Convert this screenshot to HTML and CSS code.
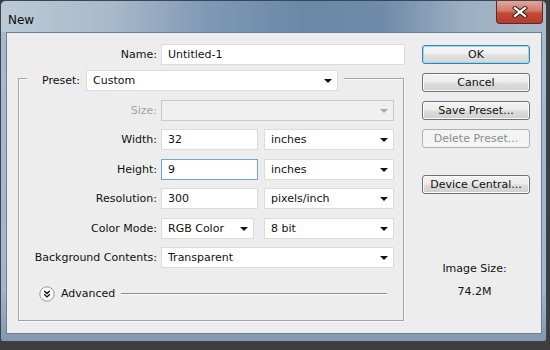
FILE: index.html
```html
<!DOCTYPE html>
<html>
<head>
<meta charset="utf-8">
<link rel="stylesheet" href="styles.css">
</head>
<body>
<div class="window">
  <div class="titlebar">
    <span class="title">New</span>
    <div class="close">
      <svg width="16" height="12" viewBox="0 0 16 12"><path d="M3 2 L13 10 M13 2 L3 10" stroke="#3a2420" stroke-width="4.2" stroke-linecap="square"/><path d="M3 2 L13 10 M13 2 L3 10" stroke="#ffffff" stroke-width="2.2" stroke-linecap="square"/></svg>
    </div>
  </div>
  <div class="client">
    <div class="form">
      <div class="name-row">
        <label class="lbl name-lbl">Name:</label>
        <div class="field name-field">Untitled-1</div>
      </div>
      <div class="group">
        <div class="preset-row">
          <label class="lbl">Preset:</label>
          <div class="field select preset-sel">Custom<span class="arrow"></span></div>
        </div>
        <div class="grid">
          <label class="lbl disabled">Size:</label>
          <div class="field select wide disabled-field"><span class="arrow gray"></span></div>

          <label class="lbl">Width:</label>
          <div class="pair">
            <div class="field num">32</div>
            <div class="field select unit">inches<span class="arrow"></span></div>
          </div>

          <label class="lbl">Height:</label>
          <div class="pair">
            <div class="field num focus">9</div>
            <div class="field select unit">inches<span class="arrow"></span></div>
          </div>

          <label class="lbl">Resolution:</label>
          <div class="pair">
            <div class="field num">300</div>
            <div class="field select unit">pixels/inch<span class="arrow"></span></div>
          </div>

          <label class="lbl">Color Mode:</label>
          <div class="pair">
            <div class="field select mode">RGB Color<span class="arrow"></span></div>
            <div class="field select unit">8 bit<span class="arrow"></span></div>
          </div>

          <label class="lbl">Background Contents:</label>
          <div class="field select wide">Transparent<span class="arrow"></span></div>
        </div>
        <div class="advanced">
          <span class="adv-icon">
            <svg width="16" height="16" viewBox="0 0 16 16"><circle cx="8" cy="8" r="7.2" fill="#fbfbfb" stroke="#9a9a9a" stroke-width="1"/><path d="M5.2 5 L8 7.6 L10.8 5 M5.2 8.3 L8 10.9 L10.8 8.3" fill="none" stroke="#111" stroke-width="1.4"/></svg>
          </span>
          <span class="adv-text">Advanced</span>
          <span class="adv-line"></span>
        </div>
      </div>
    </div>
    <div class="side">
      <div class="btn default">OK</div>
      <div class="btn">Cancel</div>
      <div class="btn">Save Preset...</div>
      <div class="btn disabled-btn">Delete Preset...</div>
      <div class="btn device">Device Central...</div>
      <div class="imgsize">
        <div>Image Size:</div>
        <div class="imgval">74.2M</div>
      </div>
    </div>
  </div>
</div>
</body>
</html>
```

FILE: styles.css
```css
html, body {
  margin: 0;
  padding: 0;
}
body {
  width: 550px;
  height: 350px;
  background: #3e3e3e;
  font-family: "DejaVu Sans", sans-serif;
  font-size: 11px;
  color: #111;
  overflow: hidden;
}
.window {
  width: 547px;
  height: 342px;
  box-sizing: border-box;
  border: 1px solid #3a4654;
  border-radius: 6px 6px 3px 3px;
  background: linear-gradient(to bottom, #a9bacb 0%, #a3b5c7 85%, #8397ad 100%);
  padding: 0 4px 7px 5px;
  display: flex;
  flex-direction: column;
  overflow: hidden;
}
.titlebar {
  height: 31px;
  margin: 0 -4px 0 -5px;
  padding-left: 7px;
  display: flex;
  align-items: flex-start;
  justify-content: space-between;
  background: linear-gradient(to right, #bccad7 0%, #a8b9ca 20%, #7f99b5 38%, #6b88a7 55%, #6f8ba9 70%, #9cafc2 85%, #a9b9c9 100%);
}
.title {
  font-size: 12px;
  color: #0c0c0c;
  margin-top: 12px;
}
.close {
  width: 45px;
  height: 22px;
  margin-right: 3px;
  border: 1px solid #5a2a24;
  border-top: none;
  border-radius: 0 0 4px 4px;
  background: linear-gradient(to bottom, #e2a79d 0%, #d3786a 45%, #c24a38 55%, #b93b2a 100%);
  display: flex;
  align-items: center;
  justify-content: center;
}
.client {
  flex: 1;
  background: #ededed;
  border: 1px solid #6d7f92;
  display: flex;
}
.form {
  width: 410px;
  padding-top: 11px;
}
.lbl {
  display: flex;
  align-items: center;
  justify-content: flex-end;
  height: 21px;
  white-space: nowrap;
}
.disabled {
  color: #a3a3a3;
}
.name-row {
  display: flex;
  gap: 4px;
}
.name-lbl {
  width: 150px;
}
.field {
  box-sizing: border-box;
  height: 21px;
  background: #ffffff;
  border: 1px solid #dcdcdc;
  padding-left: 6px;
  display: flex;
  align-items: center;
  position: relative;
  white-space: nowrap;
}
.name-field {
  width: 244px;
}
.select .arrow {
  position: absolute;
  right: 5px;
  top: 8px;
  width: 0;
  height: 0;
  border-left: 4px solid transparent;
  border-right: 4px solid transparent;
  border-top: 4px solid #111;
}
.select .arrow.gray {
  border-top-color: #a8a8a8;
}
.group {
  box-sizing: border-box;
  margin: 13px 0 0 11px;
  width: 386px;
  height: 243px;
  border: 1px solid #a4a4a4;
  box-shadow: inset 1px 1px 0 #fafafa, 1px 1px 0 #fafafa;
}
.preset-row {
  margin: -9px 0 0 8px;
  width: 317px;
  box-sizing: border-box;
  padding-right: 6px;
  background: #ededed;
  display: flex;
  justify-content: flex-end;
  gap: 6px;
}
.preset-sel {
  width: 252px;
}
.grid {
  margin-top: 8.5px;
  display: grid;
  grid-template-columns: 138px 233px;
  grid-auto-rows: 21px;
  column-gap: 4px;
  row-gap: 8.5px;
}
.wide {
  width: 233px;
}
.disabled-field {
  background: #efefef;
  border-color: #c9c9c9;
}
.pair {
  display: flex;
  gap: 6px;
}
.num {
  width: 97px;
}
.mode {
  width: 93px;
}
.pair .mode + .unit {
  margin-left: 4px;
}
.unit {
  width: 130px;
}
.focus {
  border-color: #6fa6dc;
}
.advanced {
  margin: 17px 0 0 20px;
  display: flex;
  align-items: center;
  height: 17px;
}
.adv-icon {
  width: 16px;
  height: 16px;
  display: block;
}
.adv-icon svg {
  display: block;
}
.adv-text {
  margin-left: 6px;
}
.adv-line {
  margin-left: 6px;
  width: 266px;
  height: 1px;
  background: #8e8e8e;
  box-shadow: 0 1px 0 #fafafa;
}
.side {
  margin-left: 5px;
  width: 108px;
  padding-top: 12px;
  display: flex;
  flex-direction: column;
  gap: 9px;
}
.btn {
  box-sizing: border-box;
  height: 19px;
  border: 1px solid #707070;
  border-radius: 3px;
  background: linear-gradient(to bottom, #f3f3f3 0%, #ebebeb 48%, #dddddd 52%, #cfcfcf 100%);
  box-shadow: inset 0 0 0 1px #fbfbfb;
  display: flex;
  align-items: center;
  justify-content: center;
  white-space: nowrap;
  font-size: 11px;
  color: #111;
}
.btn.default {
  border-color: #3c7fb1;
  box-shadow: inset 0 0 0 1px #8fdcf6;
  background: linear-gradient(to bottom, #f6f6f6 0%, #eeeeee 48%, #e2e2e2 52%, #d6d6d6 100%);
}
.btn.disabled-btn {
  border-color: #adb2b5;
  background: #f4f4f4;
  box-shadow: none;
  color: #8d8d8d;
}
.btn.device {
  margin-top: 18px;
}
.imgsize {
  margin-top: 59px;
  text-align: center;
  padding-right: 3px;
}
.imgval {
  margin-top: 10px;
}
```
